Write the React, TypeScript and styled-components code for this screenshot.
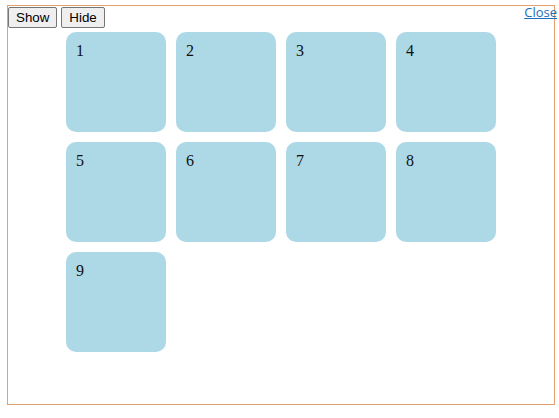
import React, { useState } from 'react';
import styled, { createGlobalStyle } from 'styled-components';

const GlobalStyle = createGlobalStyle`
    body{
        margin:0;
        font-family:'Liberation Serif', serif;
        background:#ffffff;
    }
`;

const Page = styled.div`
    padding:5px 0 0 7px;
`;

const Panel = styled.div`
    position:relative;
    width:546px;
    height:398px;
    border:1px solid #e0a070;
`;

const Toolbar = styled.div`
    display:flex;
    gap:4px;
    padding:1px 0 0 0;
`;

const Button = styled.button`
    font-family:'Liberation Sans', Arial, sans-serif;
    font-size:13.33px;
    color:#000000;
    background:#efefef;
    border:1px solid #767676;
    border-radius:2px;
    padding:2px 7px;
    height:21px;
    cursor:pointer;
`;

const CloseLink = styled.a`
    position:absolute;
    top:-3px;
    right:-3px;
    font-family:'Open Sans', 'Liberation Sans', sans-serif;
    font-size:13px;
    color:#1a6fb8;
    text-decoration:underline;
    cursor:pointer;
`;

const Grid = styled.div<{ $hidden: boolean }>`
    display:${p => (p.$hidden ? 'none' : 'grid')};
    grid-template-columns:repeat(4, 100px);
    gap:10px;
    margin:4px 0 0 58px;
`;

const Card = styled.div`
    width:100px;
    height:100px;
    box-sizing:border-box;
    padding:10px;
    border-radius:10px;
    background:#add8e6;
    font-size:16px;
    color:#111111;
`;

const App: React.FC = () => {
    const [hidden, setHidden] = useState(false);
    const items = [1, 2, 3, 4, 5, 6, 7, 8, 9];
    return (
        <Page>
            <GlobalStyle />
            <Panel>
                <Toolbar>
                    <Button onClick={() => setHidden(false)}>Show</Button>
                    <Button onClick={() => setHidden(true)}>Hide</Button>
                </Toolbar>
                <CloseLink onClick={() => setHidden(true)}>Close</CloseLink>
                <Grid $hidden={hidden}>
                    {items.map(n => (
                        <Card key={n}>{n}</Card>
                    ))}
                </Grid>
            </Panel>
        </Page>
    );
};

export default App;
